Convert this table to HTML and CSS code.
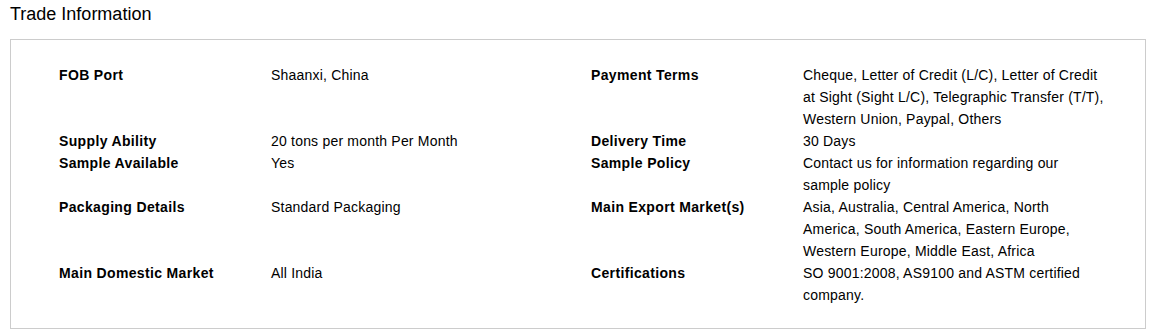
FILE: index.html
```html
<!DOCTYPE html>
<html>
<head>
<meta charset="utf-8">
<link rel="stylesheet" href="styles.css">
</head>
<body>
<div class="page">
  <h2 class="title">Trade Information</h2>
  <div class="box">
    <div class="grid">
      <div class="lbl">FOB Port</div><div class="val">Shaanxi, China</div>
      <div class="lbl">Payment Terms</div><div class="val">Cheque, Letter of Credit (L/C), Letter of Credit at Sight (Sight L/C), Telegraphic Transfer (T/T), Western Union, Paypal, Others</div>
      <div class="lbl">Supply Ability</div><div class="val">20 tons per month Per Month</div>
      <div class="lbl">Delivery Time</div><div class="val">30 Days</div>
      <div class="lbl">Sample Available</div><div class="val">Yes</div>
      <div class="lbl">Sample Policy</div><div class="val">Contact us for information regarding our sample policy</div>
      <div class="lbl">Packaging Details</div><div class="val">Standard Packaging</div>
      <div class="lbl">Main Export Market(s)</div><div class="val">Asia, Australia, Central America, North America, South America, Eastern Europe, Western Europe, Middle East, Africa</div>
      <div class="lbl">Main Domestic Market</div><div class="val">All India</div>
      <div class="lbl">Certifications</div><div class="val">SO 9001:2008, AS9100 and ASTM certified company.</div>
    </div>
  </div>
</div>
</body>
</html>
```
FILE: styles.css
```css
html, body {
  margin: 0;
  padding: 0;
  background: #fff;
}
.page {
  padding: 0 10px 0 10px;
  font-family: "Liberation Sans", Arial, sans-serif;
  color: #000;
}
.title {
  margin: 0;
  padding-top: 3px;
  font-size: 18px;
  font-weight: normal;
  line-height: 22px;
  height: 36px;
}
.box {
  border: 1px solid #ccc;
  padding: 24px 22px 22px 48px;
}
.grid {
  display: grid;
  grid-template-columns: 212px 320px 212px 320px;
  font-size: 14px;
  line-height: 22px;
}
.lbl {
  font-weight: bold;
  letter-spacing: 0.35px;
}
.val {
  letter-spacing: 0.2px;
  padding-right: 17px;
}
```
